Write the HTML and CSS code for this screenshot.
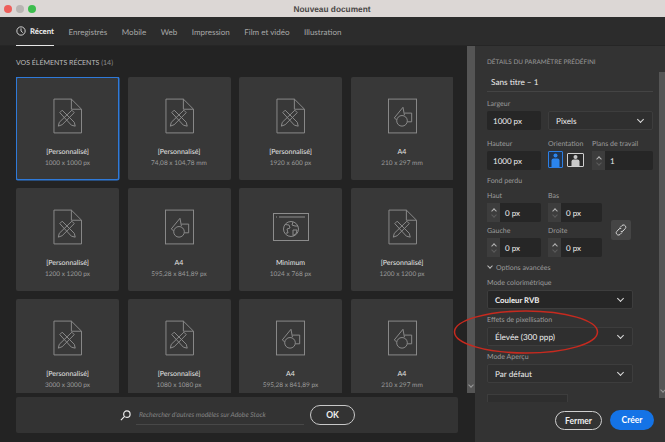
FILE: index.html
```html
<!DOCTYPE html>
<html lang="fr">
<head>
    <meta charset="UTF-8">
    <meta name="viewport" content="width=device-width, initial-scale=1.0">
    <title>Nouveau document</title>
    <link rel="stylesheet" href="styles.css">
</head>
<body>
    <svg class="defs" width="0" height="0">
        <symbol id="icon-custom" viewBox="0 0 30 36">
            <path d="M1 .5H19L29.5 11V35.5H1Z"/>
            <path d="M19 .5V11H29.5"/>
            <path d="M7 14.500 9.500 12 22 24.500 23 28.500 19 27.500Z"/>
            <path d="M19.500 12 22 14.500 9.500 27 5.500 28.500 6.500 24.500Z"/>
        </symbol>
        <symbol id="icon-a4" viewBox="0 0 30 36">
            <rect x=".5" y=".5" width="29" height="35"/>
            <path d="M6.500 20 15.500 9 17 17"/>
            <path d="M6.500 20 9 22"/>
            <path d="M17 15H24.500V24H20"/>
            <circle cx="14.500" cy="23" r="5.500"/>
        </symbol>
        <symbol id="icon-web" viewBox="0 0 36 28">
            <rect x=".5" y=".5" width="35" height="27"/>
            <path d="M6 4H32M3 4H4"/>
            <circle cx="18" cy="16" r="7.500"/>
            <path d="M12 11.500 16 12 17 15 14 16 15 20 13 20M20 9 19 12 22 13 25 13M20 17 24 17 23 21 20 22.500Z"/>
        </symbol>
    </svg>

    <div class="window">
        <header class="titlebar">
            <span class="light red"></span>
            <span class="light gray"></span>
            <span class="light green"></span>
            <span class="window-title">Nouveau document</span>
        </header>

        <nav class="tabs">
            <a class="tab active">
                <svg class="clock" viewBox="0 0 12 12"><circle cx="6" cy="6" r="5"/><path d="M6 2.800V6L8.200 8"/></svg>
                Récent
            </a>
            <a class="tab">Enregistrés</a>
            <a class="tab">Mobile</a>
            <a class="tab">Web</a>
            <a class="tab">Impression</a>
            <a class="tab">Film et vidéo</a>
            <a class="tab">Illustration</a>
        </nav>

        <main class="main">
            <section class="recent">
                <h2 class="recent-title">VOS ÉLÉMENTS RÉCENTS <span class="count">(14)</span></h2>
                <div class="cards">
                    <div class="card selected">
                        <svg class="icon"><use href="#icon-custom"/></svg>
                        <div class="card-name">[Personnalisé]</div>
                        <div class="card-size">1000 x 1000 px</div>
                    </div>
                    <div class="card">
                        <svg class="icon"><use href="#icon-custom"/></svg>
                        <div class="card-name">[Personnalisé]</div>
                        <div class="card-size">74,08 x 104,78 mm</div>
                    </div>
                    <div class="card">
                        <svg class="icon"><use href="#icon-custom"/></svg>
                        <div class="card-name">[Personnalisé]</div>
                        <div class="card-size">1920 x 600 px</div>
                    </div>
                    <div class="card">
                        <svg class="icon"><use href="#icon-a4"/></svg>
                        <div class="card-name">A4</div>
                        <div class="card-size">210 x 297 mm</div>
                    </div>
                    <div class="card">
                        <svg class="icon"><use href="#icon-custom"/></svg>
                        <div class="card-name">[Personnalisé]</div>
                        <div class="card-size">1200 x 1200 px</div>
                    </div>
                    <div class="card">
                        <svg class="icon"><use href="#icon-a4"/></svg>
                        <div class="card-name">A4</div>
                        <div class="card-size">595,28 x 841,89 px</div>
                    </div>
                    <div class="card">
                        <svg class="icon icon-web"><use href="#icon-web"/></svg>
                        <div class="card-name">Minimum</div>
                        <div class="card-size">1024 x 768 px</div>
                    </div>
                    <div class="card">
                        <svg class="icon"><use href="#icon-custom"/></svg>
                        <div class="card-name">[Personnalisé]</div>
                        <div class="card-size">1200 x 1200 px</div>
                    </div>
                    <div class="card">
                        <svg class="icon"><use href="#icon-custom"/></svg>
                        <div class="card-name">[Personnalisé]</div>
                        <div class="card-size">3000 x 3000 px</div>
                    </div>
                    <div class="card">
                        <svg class="icon"><use href="#icon-custom"/></svg>
                        <div class="card-name">[Personnalisé]</div>
                        <div class="card-size">1080 x 1080 px</div>
                    </div>
                    <div class="card">
                        <svg class="icon"><use href="#icon-a4"/></svg>
                        <div class="card-name">A4</div>
                        <div class="card-size">595,28 x 841,89 px</div>
                    </div>
                    <div class="card">
                        <svg class="icon"><use href="#icon-a4"/></svg>
                        <div class="card-name">A4</div>
                        <div class="card-size">210 x 297 mm</div>
                    </div>
                </div>
                <div class="search-bar">
                    <svg class="search-icon" viewBox="0 0 12 12"><circle cx="7.500" cy="4.500" r="3.500"/><path d="M5 7 1 11"/></svg>
                    <div class="search-input">Rechercher d'autres modèles sur Adobe Stock</div>
                    <button class="btn btn-ok">OK</button>
                </div>
            </section>

            <div class="scrollbar scrollbar-left"><span class="scroll-arrow"></span></div>

            <aside class="panel">
                <div class="panel-body">
                    <div class="form">
                        <h2 class="panel-title">DÉTAILS DU PARAMÈTRE PRÉDÉFINI</h2>
                        <div class="doc-name">Sans titre – 1</div>

                        <div class="row row-first">
                            <div class="field w-54">
                                <div class="label">Largeur</div>
                                <div class="input">1000 px</div>
                            </div>
                            <div class="field w-105">
                                <div class="label">&nbsp;</div>
                                <div class="select">Pixels<span class="chevron"></span></div>
                            </div>
                        </div>

                        <div class="row row-size">
                            <div class="field w-54">
                                <div class="label">Hauteur</div>
                                <div class="input">1000 px</div>
                            </div>
                            <div class="field orientation">
                                <div class="label">Orientation</div>
                                <div class="orient-btns">
                                    <span class="orient portrait">
                                        <svg viewBox="0 0 13 15"><circle cx="6.500" cy="3.500" r="2"/><path d="M2.500 15V8.500Q2.500 6.500 4.500 6.500H8.500Q10.500 6.500 10.500 8.500V15Z"/></svg>
                                    </span>
                                    <span class="orient landscape">
                                        <svg viewBox="0 0 15 12"><circle cx="7.500" cy="3" r="2"/><path d="M3.500 12V7.500Q3.500 5.500 5.500 5.500H9.500Q11.500 5.500 11.500 7.500V12Z"/></svg>
                                    </span>
                                </div>
                            </div>
                            <div class="field w-61">
                                <div class="label">Plans de travail</div>
                                <div class="input has-stepper">
                                    <span class="stepper"><i class="up"></i><i class="down"></i></span>1
                                </div>
                            </div>
                        </div>

                        <div class="label bleed-title">Fond perdu</div>
                        <div class="bleed">
                            <div class="bleed-grid">
                                <div class="field">
                                    <div class="label">Haut</div>
                                    <div class="input has-stepper"><span class="stepper"><i class="up"></i><i class="down"></i></span>0 px</div>
                                </div>
                                <div class="field">
                                    <div class="label">Bas</div>
                                    <div class="input has-stepper"><span class="stepper"><i class="up"></i><i class="down"></i></span>0 px</div>
                                </div>
                                <div class="field">
                                    <div class="label">Gauche</div>
                                    <div class="input has-stepper"><span class="stepper"><i class="up"></i><i class="down"></i></span>0 px</div>
                                </div>
                                <div class="field">
                                    <div class="label">Droite</div>
                                    <div class="input has-stepper"><span class="stepper"><i class="up"></i><i class="down"></i></span>0 px</div>
                                </div>
                            </div>
                            <span class="link-btn">
                                <svg viewBox="0 0 12 12"><path d="M5 3.500 7 1.500Q8 .5 9.500 1.200 11 2 10.800 3.500 10.600 4.200 10 4.800L8 7Q7 8 5.800 7.500"/><path d="M7 8.500 5 10.500Q4 11.500 2.500 10.800 1 10 1.200 8.500 1.400 7.800 2 7.200L4 5Q5 4 6.200 4.500"/></svg>
                            </span>
                        </div>

                        <div class="advanced"><span class="chevron chevron-small"></span>Options avancées</div>

                        <div class="field group-color">
                            <div class="label">Mode colorimétrique</div>
                            <div class="select select-strong">Couleur RVB<span class="chevron"></span></div>
                        </div>
                        <div class="field group-next">
                            <div class="label">Effets de pixellisation</div>
                            <div class="select">Élevée (300 ppp)<span class="chevron"></span></div>
                        </div>
                        <div class="field group-next">
                            <div class="label">Mode Aperçu</div>
                            <div class="select">Par défaut<span class="chevron"></span></div>
                        </div>
                        <div class="cut-box"></div>
                    </div>
                    <div class="scrollbar scrollbar-right"><span class="scroll-arrow"></span></div>
                </div>
                <footer class="panel-footer">
                    <button class="btn btn-close">Fermer</button>
                    <button class="btn btn-create">Créer</button>
                </footer>
            </aside>
        </main>

        <!-- red annotation drawn over the screenshot -->
        <svg class="annotation" viewBox="0 0 148 48"><ellipse cx="74" cy="24" rx="71.500" ry="21"/></svg>
    </div>
</body>
</html>
```

FILE: styles.css
```css
* {
    box-sizing: border-box;
}

body {
    margin: 0;
    background: #222;
    font-family: 'Lato', 'Liberation Sans', sans-serif;
    color: #ddd;
    text-rendering: geometricPrecision;
}

.defs {
    position: absolute;
}

.window {
    position: relative;
    width: 665px;
    height: 442px;
    display: flex;
    flex-direction: column;
    overflow: hidden;
    background: #232323;
}

/* title bar */
.titlebar {
    position: relative;
    height: 17px;
    flex: none;
    display: flex;
    align-items: center;
    padding-left: 4px;
    gap: 4px;
    background: #dcd7d5;
}

.light {
    width: 8px;
    height: 8px;
    border-radius: 50%;
}

.light.red { background: #ee5f5b; }
.light.gray { background: #b9b5b3; }
.light.green { background: #3dbd4e; }

.window-title {
    flex: 1;
    padding-right: 41px;
    text-align: center;
    font-family: 'Liberation Sans', sans-serif;
    font-size: 8.300px;
    font-weight: bold;
    color: #4a4746;
}

/* tabs */
.tabs {
    height: 29px;
    flex: none;
    display: flex;
    gap: 14.500px;
    padding-left: 16px;
    background: #2c2c2c;
    border-bottom: 1px solid #262626;
}

.tab {
    display: flex;
    align-items: center;
    gap: 4px;
    height: 29px;
    font-size: 8px;
    color: #a8a8a8;
}

.tab.active {
    color: #f0f0f0;
    font-size: 7.800px;
    font-weight: bold;
    border-bottom: 1px solid #e6e6e6;
}

.clock {
    width: 10px;
    height: 10px;
    fill: none;
    stroke: #eee;
    stroke-width: 1;
}

.main {
    flex: 1;
    display: flex;
    min-height: 0;
}

/* left side */
.recent {
    width: 467px;
    flex: none;
    padding: 11px 9px 0 16px;
}

.recent-title {
    margin: 0 0 8px;
    height: 12px;
    line-height: 12px;
    font-size: 7px;
    font-weight: normal;
    color: #bdbdbd;
}

.count {
    color: #8d8d8d;
}

.cards {
    display: grid;
    grid-template-columns: repeat(4, 103px);
    grid-auto-rows: 102.500px;
    gap: 8.500px;
    width: 437px;
    height: 316px;
    overflow: hidden;
}

.card {
    display: flex;
    flex-direction: column;
    align-items: center;
    padding-top: 21px;
    background: #383838;
    border-radius: 2px;
}

.card.selected {
    padding-top: 20px;
    border: 1px solid #2f7ad9;
    box-shadow: 0 0 0 .5px #2f7ad9;
}

.icon {
    width: 29px;
    height: 36px;
    fill: none;
    stroke: #8c8c8c;
    stroke-width: 1;
    overflow: visible;
}

.icon-web {
    width: 36px;
}

.card-name {
    margin-top: 13px;
    height: 11px;
    line-height: 11px;
    font-size: 7px;
    color: #e4e4e4;
}

.card-size {
    line-height: 11px;
    font-size: 6.500px;
    color: #9a9a9a;
}

.search-bar {
    margin-top: 4px;
    width: 442px;
    height: 36px;
    display: flex;
    align-items: center;
    padding-left: 104px;
    background: #333;
    border-radius: 2px;
}

.search-icon {
    width: 11px;
    height: 11px;
    fill: none;
    stroke: #eee;
    stroke-width: 1.300;
}

.search-input {
    width: 168px;
    height: 19px;
    margin-left: 5px;
    padding: 5px 0 0 3px;
    font-size: 6.800px;
    font-style: italic;
    color: #858585;
    border-bottom: 1px solid #484848;
    white-space: nowrap;
}

.btn {
    font-family: inherit;
    font-weight: bold;
    padding: 0;
    border-radius: 10px;
    cursor: pointer;
}

.btn-ok {
    width: 45px;
    height: 20px;
    margin-left: 6px;
    font-size: 8.500px;
    color: #eee;
    background: transparent;
    border: 1px solid #c8c8c8;
}

/* scrollbars */
.scrollbar {
    position: relative;
    background: #555;
}

.scrollbar-left {
    width: 8px;
    height: 347px;
    flex: none;
}

.scrollbar-right {
    width: 7px;
    flex: none;
    margin-top: 26px;
    margin-bottom: 4px;
}

.scroll-arrow {
    position: absolute;
    left: 2px;
    bottom: 6px;
    width: 4px;
    height: 4px;
    border-right: 1px solid #999;
    border-bottom: 1px solid #999;
    transform: rotate(45deg);
}

/* right side */
.panel {
    flex: 1;
    display: flex;
    flex-direction: column;
    background: #333;
}

.panel-body {
    flex: 1;
    min-height: 0;
    display: flex;
}

.form {
    flex: 1;
    min-width: 0;
    overflow: hidden;
    padding: 11px 6px 0 12px;
}

.panel-title {
    margin: 0;
    height: 12px;
    line-height: 12px;
    font-size: 6.400px;
    font-weight: normal;
    color: #9a9a9a;
    white-space: nowrap;
}

.doc-name {
    margin-top: 5px;
    height: 18px;
    padding: 1px 0 0 4px;
    line-height: 14px;
    font-size: 8.200px;
    color: #eee;
    border-bottom: 1px solid #444;
}

.row {
    display: flex;
    gap: 7px;
}

.row-first {
    margin-top: 6px;
}

.row-size {
    margin-top: 8px;
}

.label {
    height: 13px;
    line-height: 13px;
    font-size: 7px;
    color: #9c9c9c;
    white-space: nowrap;
}

.w-54 { width: 54px; }
.w-61 { width: 61px; }
.w-105 { width: 105px; }

.input,
.select {
    display: flex;
    align-items: center;
    height: 19px;
    font-size: 8px;
    color: #eee;
    border-radius: 2px;
}

.input {
    padding-left: 6px;
    background: #262626;
}

.input.has-stepper {
    padding-left: 0;
}

.stepper {
    width: 13px;
    height: 100%;
    flex: none;
    display: flex;
    flex-direction: column;
    align-items: center;
    justify-content: center;
    gap: 4px;
    margin-right: 5px;
    background: #3d3d3d;
}

.stepper i {
    display: block;
    width: 4px;
    height: 4px;
    border-top: 1px solid #b4b4b4;
    border-left: 1px solid #b4b4b4;
}

.stepper .up {
    transform: translateY(2px) rotate(45deg);
}

.stepper .down {
    transform: translateY(-2px) rotate(225deg);
    border-color: #5c5c5c;
}

.select {
    position: relative;
    padding-left: 7px;
    font-size: 8.200px;
    background: #2f2f2f;
    border: 1px solid #3d3d3d;
}

.select-strong {
    background: #262626;
    font-size: 7.800px;
    font-weight: bold;
}

.chevron {
    position: absolute;
    right: 9px;
    top: 5px;
    width: 5px;
    height: 5px;
    border-right: 1.500px solid #ddd;
    border-bottom: 1.500px solid #ddd;
    transform: rotate(45deg);
}

.orientation {
    width: 37px;
}

.orient-btns {
    display: flex;
    align-items: center;
    gap: 4px;
}

.orient {
    display: flex;
    align-items: flex-end;
    justify-content: center;
    flex: none;
    border-radius: 1px;
}

.portrait {
    width: 15px;
    height: 17px;
    border: 1px solid #2b7fe6;
    background: #22344d;
}

.portrait svg {
    width: 13px;
    height: 15px;
    fill: #2b85ee;
}

.landscape {
    width: 17px;
    height: 14px;
    border: 1px solid #cfcfcf;
    background: #2a2a2a;
}

.landscape svg {
    width: 15px;
    height: 12px;
    fill: #c9c9c9;
}

.bleed-title {
    margin-top: 5px;
    height: 15px;
}

.bleed {
    display: flex;
    gap: 9px;
}

.bleed-grid {
    display: grid;
    grid-template-columns: 54px 54px;
    gap: 3px 7px;
}

.link-btn {
    align-self: flex-end;
    margin-bottom: 17px;
    width: 20px;
    height: 20px;
    display: flex;
    align-items: center;
    justify-content: center;
    background: #454545;
    border-radius: 2px;
}

.link-btn svg {
    width: 12px;
    height: 12px;
    fill: none;
    stroke: #d8d8d8;
    stroke-width: 1;
}

.advanced {
    position: relative;
    margin-top: 5px;
    height: 12px;
    padding-left: 9px;
    line-height: 12px;
    font-size: 7px;
    color: #9c9c9c;
}

.chevron-small {
    left: 1px;
    right: auto;
    top: 2px;
    width: 4px;
    height: 4px;
    border-width: 1px;
    border-color: #bbb;
}

.group-color {
    margin-top: 3px;
    width: 146px;
}

.group-next {
    margin-top: 5px;
    width: 146px;
}

.cut-box {
    margin-top: 11px;
    width: 81px;
    height: 12px;
    background: #2e2e2e;
    border: 1px solid #3d3d3d;
}

.panel-footer {
    height: 40px;
    flex: none;
    display: flex;
    justify-content: flex-end;
    gap: 8px;
    padding: 8px 12px 0 0;
}

.btn-close {
    width: 47px;
    height: 19px;
    margin-top: 1px;
    font-size: 8.500px;
    color: #eee;
    background: transparent;
    border: 1px solid #d0d0d0;
}

.btn-create {
    width: 44px;
    height: 20px;
    font-size: 8.500px;
    color: #fff;
    background: #1473e6;
    border: none;
}

.annotation {
    position: absolute;
    left: 452px;
    top: 308px;
    width: 148px;
    height: 48px;
    fill: none;
    stroke: #c62a1f;
    stroke-width: 1.500;
    pointer-events: none;
}
```
